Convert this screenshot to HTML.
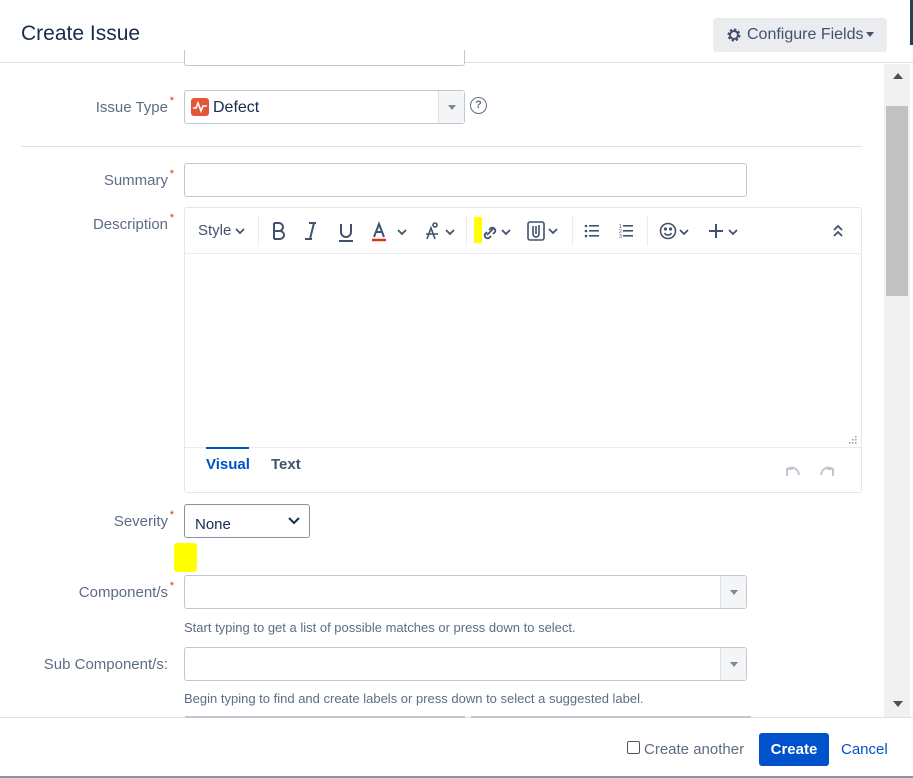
<!DOCTYPE html>
<html><head><meta charset="utf-8"><style>
*{box-sizing:border-box;margin:0;padding:0}
body{width:913px;height:778px;overflow:hidden;background:#fff;font-family:"Liberation Sans",sans-serif;color:#172b4d;position:relative}
.a{position:absolute}
.lbl{position:absolute;right:745px;font-size:15px;color:#5e6c84;text-align:right;white-space:nowrap}
.lbl sup{color:#de350b;font-size:11px;position:absolute;right:-6px;top:-4px}
.in{position:absolute;border:1px solid #c1c7d0;border-radius:3px;background:#fff}
.dd{position:absolute;right:0;top:0;bottom:0;width:26px;border-left:1px solid #dfe1e6;background:#f4f5f7}
.dd:after{content:"";position:absolute;left:9px;top:14px;border:4px solid transparent;border-top:5px solid #7a869a}
.help{font-size:13px;color:#5e6c84}
svg.i{position:absolute}
</style></head><body>
<div class="a" style="left:0;top:0;width:913px;height:63px;border-bottom:1px solid #dfe1e6;background:#fff"></div>
<div class="a" style="left:21px;top:22px;font-size:21px;color:#172b4d">Create Issue</div>
<div class="a" style="left:713px;top:18px;width:174px;height:34px;background:#ebecf0;border-radius:3px;font-size:16px;color:#42526e;padding:8px 0 0 34px">Configure Fields</div>
<svg class="a" style="left:726px;top:27px" width="16" height="16" viewBox="0 0 16 16"><circle cx="8" cy="8" r="5" fill="none" stroke="#42526e" stroke-width="3" stroke-dasharray="2.2 1.7"/><circle cx="8" cy="8" r="4" fill="none" stroke="#42526e" stroke-width="2"/></svg>
<div class="a" style="left:866px;top:32px;border:4px solid transparent;border-top:5px solid #42526e"></div>
<div class="a" style="left:910px;top:0;width:3px;height:45px;background:#2c3e50"></div>

<div class="a" style="left:884px;top:64px;width:26px;height:653px;background:#f1f1f1"></div>
<div class="a" style="left:886px;top:106px;width:22px;height:190px;background:#c1c1c1"></div>
<div class="a" style="left:893px;top:73px;border:5px solid transparent;border-bottom:6px solid #505050;border-top:0"></div>
<div class="a" style="left:893px;top:701px;border:5px solid transparent;border-top:6px solid #505050;border-bottom:0"></div>

<div class="in" style="left:184px;top:50px;width:281px;height:16px;border-top:0;border-radius:0 0 3px 3px"></div>

<div class="lbl" style="top:99px">Issue Type<sup>*</sup></div>
<div class="in" style="left:184px;top:90px;width:281px;height:34px"><div class="dd"></div></div>
<div class="a" style="left:191px;top:98px;width:18px;height:18px;background:#e5553a;border-radius:3px"></div>
<svg class="a" style="left:191px;top:98px" width="18" height="18"><path d="M2 10h3l2-5 3 8 2-5h4" fill="none" stroke="#fff" stroke-width="1.6"/></svg>
<div class="a" style="left:213px;top:99px;font-size:16px">Defect</div>
<div class="a" style="left:470px;top:97px;width:17px;height:17px;border:1.5px solid #5e6c84;border-radius:50%;font-size:11px;color:#5e6c84;text-align:center;line-height:14px;font-weight:bold">?</div>
<div class="a" style="left:21px;top:146px;width:841px;height:1px;background:#dfe1e6"></div>

<div class="lbl" style="top:172px">Summary<sup>*</sup></div>
<div class="in" style="left:184px;top:163px;width:563px;height:34px"></div>

<div class="lbl" style="top:216px">Description<sup>*</sup></div>
<div class="in" style="left:184px;top:207px;width:678px;height:286px;border-color:#e4e6ea"></div>
<div class="a" style="left:185px;top:253px;width:676px;height:1px;background:#ebecf0"></div>
<div class="a" style="left:185px;top:447px;width:676px;height:1px;background:#ebecf0"></div>
<div class="a" style="left:198px;top:222px;font-size:15px;color:#42526e">Style</div>
<svg class="i" style="left:235px;top:227px" width="10" height="8"><path d="M1 2l4 4 4-4" fill="none" stroke="#42526e" stroke-width="1.8"/></svg>
<div class="a" style="left:258px;top:215px;width:1px;height:31px;background:#ebecf0"></div>
<svg class="i" style="left:270px;top:221px" width="140" height="22" fill="none" stroke="#42526e" stroke-width="2">
<path d="M4 2v16M4 2h5a4 4 0 0 1 0 8H4M4 10h6a4 4 0 0 1 0 8H4"/>
<path d="M39 2h7M35 18h7M44 2l-4 16"/>
<path d="M71 3v8a5 5 0 0 0 10 0V3M69 20h14"/>
<path d="M104 16l5-13 5 13M106 11h6"/>
<path d="M102 19h14" stroke="#de350b" stroke-width="2.5"/>
<path d="M128 9l4 4 4-4" stroke-width="1.8"/>
</svg>
<svg class="i" style="left:424px;top:221px" width="32" height="22" fill="none" stroke="#42526e" stroke-width="1.6">
<path d="M3 18l4-11 4 11M2 13h12"/><circle cx="11" cy="4" r="2"/><path d="M22 9l4 4 4-4" stroke-width="1.8"/>
</svg>
<div class="a" style="left:466px;top:215px;width:1px;height:31px;background:#ebecf0"></div>
<div class="a" style="left:474px;top:217px;width:8px;height:26px;background:#ffff00"></div>
<svg class="i" style="left:480px;top:221px" width="32" height="22" fill="none" stroke="#42526e" stroke-width="1.8">
<path d="M7 11l-2 2a3 3 0 0 0 4 4l2-2M9 9l2-2a3 3 0 0 1 4 4l-2 2M7 14l6-6"/><path d="M22 9l4 4 4-4"/>
</svg>
<svg class="i" style="left:526px;top:220px" width="34" height="22" fill="none" stroke="#42526e" stroke-width="1.6">
<rect x="2" y="2" width="16" height="18" rx="2"/><path d="M7 6v8a3 3 0 0 0 6 0V5M10 6v8"/><path d="M23 9l4 4 4-4" stroke-width="1.8"/>
</svg>
<div class="a" style="left:572px;top:215px;width:1px;height:31px;background:#ebecf0"></div>
<svg class="i" style="left:584px;top:222px" width="52" height="18" fill="#42526e">
<circle cx="2" cy="4" r="1.3"/><circle cx="2" cy="9" r="1.3"/><circle cx="2" cy="14" r="1.3"/>
<rect x="5" y="3" width="10" height="1.6"/><rect x="5" y="8" width="10" height="1.6"/><rect x="5" y="13" width="10" height="1.6"/>
<text x="35" y="6" font-size="5" font-family="Liberation Sans">1</text><text x="35" y="11" font-size="5" font-family="Liberation Sans">2</text><text x="35" y="16" font-size="5" font-family="Liberation Sans">3</text>
<rect x="39" y="3" width="10" height="1.6"/><rect x="39" y="8" width="10" height="1.6"/><rect x="39" y="13" width="10" height="1.6"/>
</svg>
<div class="a" style="left:647px;top:215px;width:1px;height:31px;background:#ebecf0"></div>
<svg class="i" style="left:659px;top:221px" width="84" height="22" fill="none" stroke="#42526e" stroke-width="1.6">
<circle cx="9" cy="10" r="7.5"/><circle cx="6.5" cy="8" r=".8" fill="#42526e"/><circle cx="11.5" cy="8" r=".8" fill="#42526e"/><path d="M5.5 12a4 4 0 0 0 7 0"/>
<path d="M21 9l4 4 4-4" stroke-width="1.8"/>
<path d="M57 3v14M50 10h14" stroke-width="2"/><path d="M70 9l4 4 4-4" stroke-width="1.8"/>
</svg>
<svg class="i" style="left:832px;top:223px" width="12" height="16" fill="none" stroke="#42526e" stroke-width="1.8"><path d="M2 7l4-4 4 4M2 13l4-4 4 4"/></svg>
<svg class="i" style="left:847px;top:434px" width="11" height="11" fill="#999"><rect x="8" y="2" width="1.5" height="1.5"/><rect x="5" y="5" width="1.5" height="1.5"/><rect x="8" y="5" width="1.5" height="1.5"/><rect x="2" y="8" width="1.5" height="1.5"/><rect x="5" y="8" width="1.5" height="1.5"/><rect x="8" y="8" width="1.5" height="1.5"/></svg>

<div class="a" style="left:206px;top:447px;width:43px;height:2px;background:#0052cc"></div>
<div class="a" style="left:206px;top:456px;font-size:15px;color:#0052cc;font-weight:bold">Visual</div>
<div class="a" style="left:271px;top:456px;font-size:15px;color:#42526e;font-weight:bold">Text</div>
<svg class="i" style="left:784px;top:464px" width="52" height="14" fill="none" stroke="#c1c7d0" stroke-width="2"><path d="M3 12V5h6M3 5c5 -3 11 -1 12 6"/><path d="M49 12V5h-6M49 5c-5 -3 -11 -1 -12 6"/></svg>

<div class="lbl" style="top:513px">Severity<sup>*</sup></div>
<div class="in" style="left:184px;top:504px;width:126px;height:34px;border-color:#8993a4"></div>
<div class="a" style="left:195px;top:516px;font-size:15px">None</div>
<svg class="a" style="left:288px;top:516px" width="12" height="10"><path d="M1 2l5 5 5-5" fill="none" stroke="#172b4d" stroke-width="2"/></svg>
<div class="a" style="left:174px;top:543px;width:23px;height:29px;background:#ffff00;border-radius:3px"></div>

<div class="lbl" style="top:584px">Component/s<sup>*</sup></div>
<div class="in" style="left:184px;top:575px;width:563px;height:34px"><div class="dd"></div></div>
<div class="a help" style="left:184px;top:620px">Start typing to get a list of possible matches or press down to select.</div>

<div class="lbl" style="top:656px">Sub Component/s:</div>
<div class="in" style="left:184px;top:647px;width:563px;height:34px"><div class="dd"></div></div>
<div class="a help" style="left:184px;top:691px">Begin typing to find and create labels or press down to select a suggested label.</div>

<div class="a" style="left:0;top:717px;width:913px;height:61px;background:#fff;border-top:1px solid #dfe1e6"></div>
<div class="a" style="left:185px;top:716px;width:280px;height:2px;background:#c1c7d0"></div>
<div class="a" style="left:471px;top:716px;width:280px;height:2px;background:#c1c7d0"></div>
<div class="a" style="left:627px;top:741px;width:13px;height:13px;border:1px solid #555;border-radius:2px"></div>
<div class="a" style="left:644px;top:741px;font-size:15px;color:#5e6c84">Create another</div>
<div class="a" style="left:759px;top:733px;width:70px;height:33px;background:#0052cc;border-radius:3px;color:#fff;font-weight:bold;font-size:15px;text-align:center;line-height:33px">Create</div>
<div class="a" style="left:841px;top:741px;font-size:15px;color:#0052cc">Cancel</div>
<div class="a" style="left:0;top:776px;width:913px;height:2px;background:#8a94a6"></div>
</body></html>
